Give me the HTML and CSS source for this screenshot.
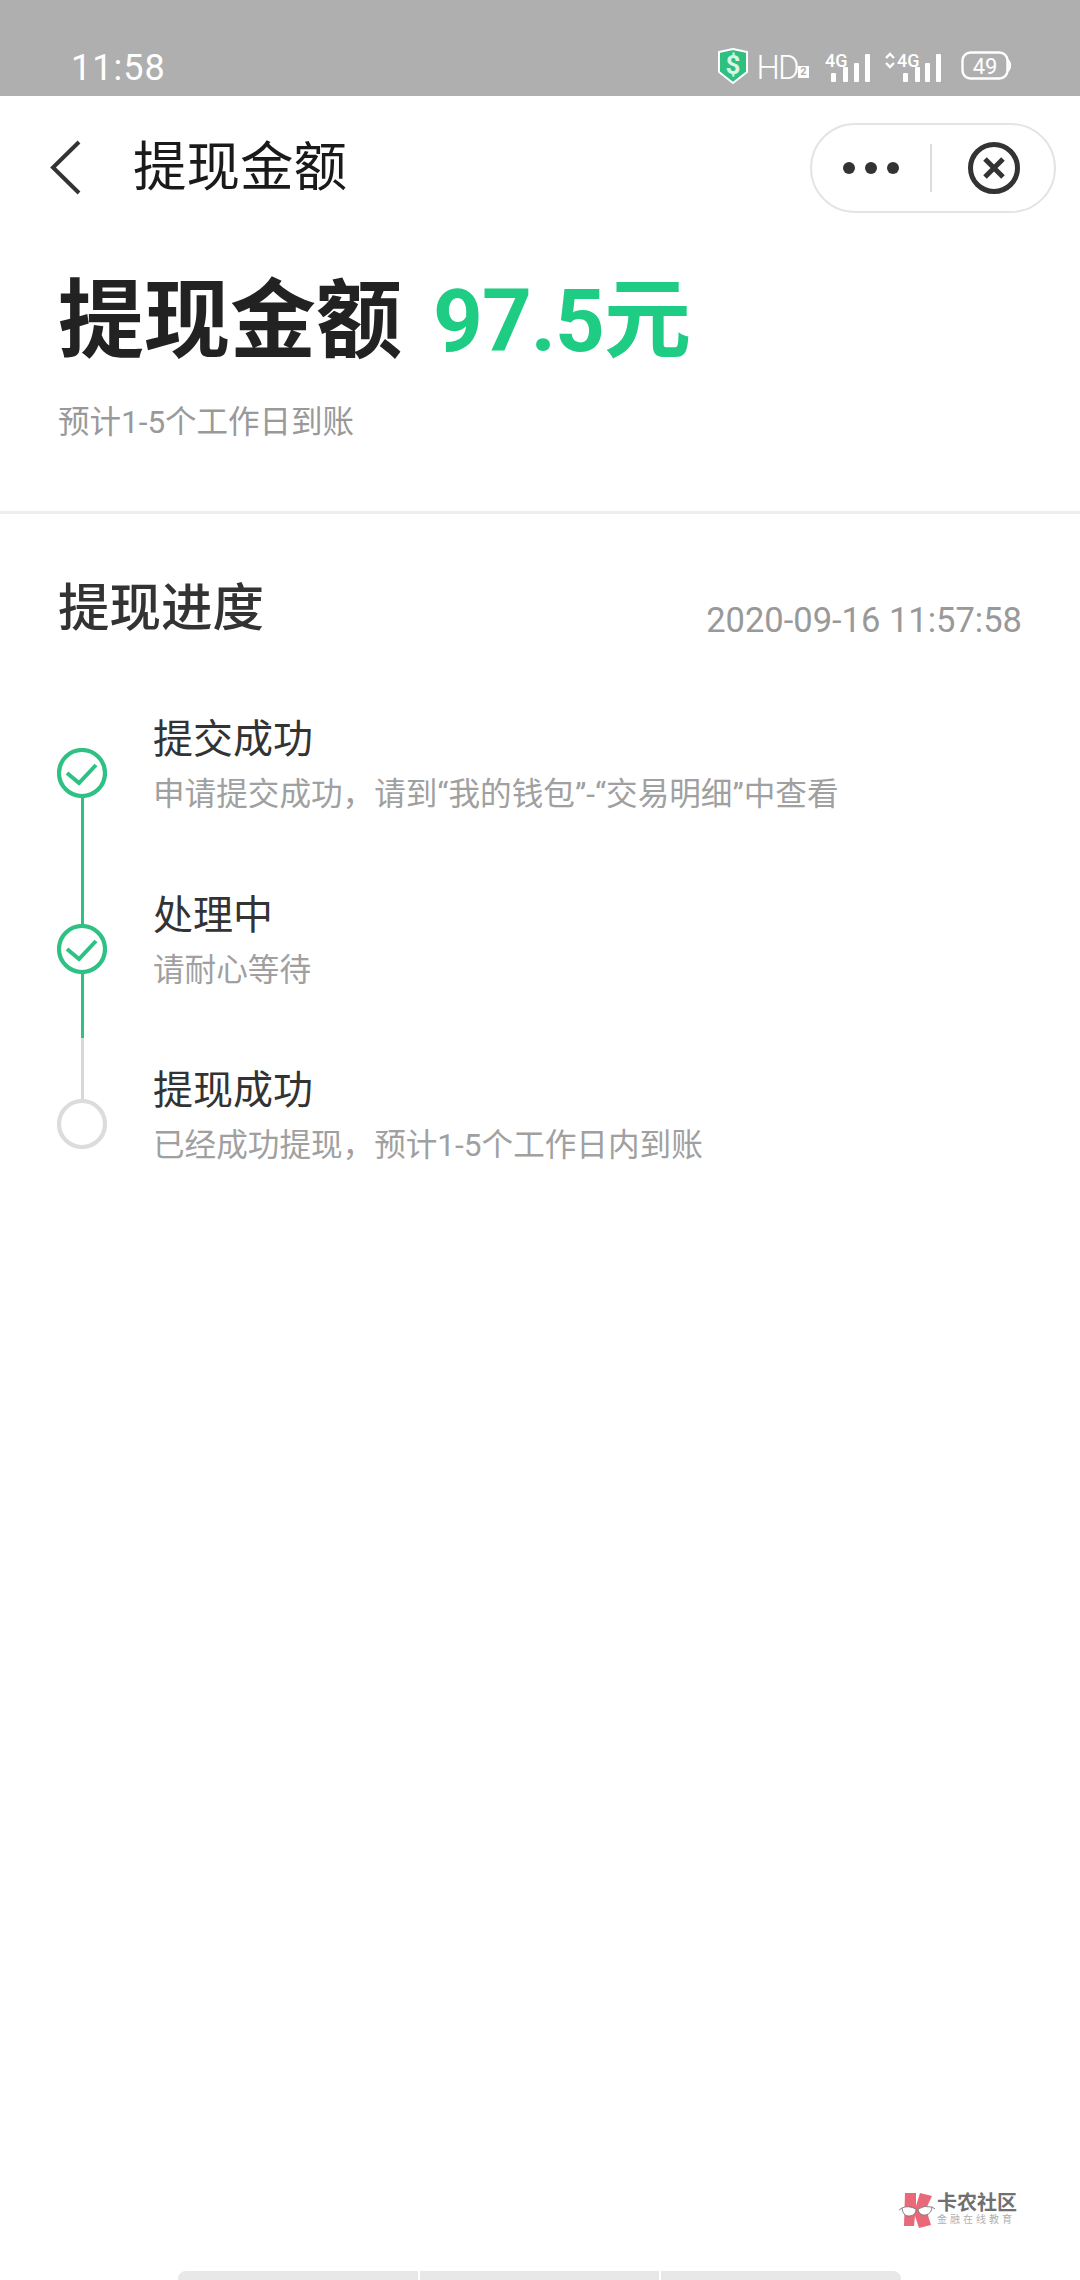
FILE: index.html
```html
<!DOCTYPE html>
<html lang="zh">
<head>
    <meta charset="UTF-8">
    <meta name="viewport" content="width=device-width, initial-scale=1.0">
    <title>提现金额</title>
    <link rel="stylesheet" href="styles.css">
</head>
<body>

    <div class="status-bar">
        <span class="status-time">11:58</span>
        <div class="status-icons">
            <svg class="icon-shield" width="32" height="38" viewBox="0 0 32 38">
                <path d="M2 5 L16 2 L30 5 V25 L16 36 L2 25 Z" fill="#2fbf7f" stroke="#fff" stroke-width="2" stroke-linejoin="round"/>
                <text x="16" y="27" text-anchor="middle" class="shield-text">$</text>
            </svg>
            <span class="status-hd">HD</span>
            <span class="status-sim">2</span>
            <svg class="icon-signal" width="46" height="36" viewBox="0 -4 46 36">
                <text x="0" y="15" class="signal-text">4G</text>
                <rect x="6" y="21" width="5" height="9" rx="1" fill="#fff"/>
                <rect x="18" y="15" width="5" height="15" rx="1" fill="#fff"/>
                <rect x="29" y="11" width="5" height="19" rx="1" fill="#fff"/>
                <rect x="40" y="2" width="5" height="28" rx="1" fill="#fff"/>
            </svg>
            <svg class="icon-signal" width="58" height="36" viewBox="0 -4 58 36">
                <path d="M2 6 L6 2 L10 6 M2 11 L6 15 L10 11" fill="none" stroke="#fff" stroke-width="2.4"/>
                <text x="13" y="15" class="signal-text">4G</text>
                <rect x="19" y="21" width="5" height="9" rx="1" fill="#fff"/>
                <rect x="31" y="15" width="5" height="15" rx="1" fill="#fff"/>
                <rect x="41" y="11" width="5" height="19" rx="1" fill="#fff"/>
                <rect x="52" y="2" width="5" height="28" rx="1" fill="#fff"/>
            </svg>
            <svg class="icon-battery" width="52" height="30" viewBox="0 0 52 30">
                <rect x="1.5" y="1.5" width="45" height="26" rx="8" fill="none" stroke="#fff" stroke-width="2.4"/>
                <path d="M48 10 Q51 14.5 48 19 Z" fill="#fff" stroke="#fff" stroke-width="1.5"/>
                <text x="24" y="23" text-anchor="middle" class="battery-text">49</text>
            </svg>
        </div>
    </div>

    <div class="nav-bar">
        <svg class="nav-back" width="40" height="60" viewBox="0 0 40 60">
            <path d="M32 4 L6 29.5 L32 55" fill="none" stroke="#333" stroke-width="4"/>
        </svg>
        <span class="nav-title">提现金额</span>
        <div class="capsule">
            <div class="capsule-dots">
                <span class="dot"></span>
                <span class="dot"></span>
                <span class="dot"></span>
            </div>
            <span class="capsule-line"></span>
            <svg class="capsule-close" width="54" height="54" viewBox="0 0 54 54">
                <circle cx="27" cy="27" r="23.5" fill="none" stroke="#333" stroke-width="5"/>
                <path d="M18 18 L36 36 M36 18 L18 36" fill="none" stroke="#333" stroke-width="5"/>
            </svg>
        </div>
    </div>

    <div class="hero">
        <h1 class="hero-title">提现金额<span class="hero-amount">97.5元</span></h1>
        <p class="hero-sub">预计1-5个工作日到账</p>
    </div>

    <div class="divider"></div>

    <div class="progress-head">
        <h2 class="progress-title">提现进度</h2>
        <span class="progress-date">2020-09-16 11:57:58</span>
    </div>

    <div class="steps">
        <div class="step">
            <div class="step-marker">
                <svg width="50" height="50" viewBox="0 0 50 50">
                    <circle cx="25" cy="25" r="23" fill="none" stroke="#2fc184" stroke-width="4.2"/>
                    <path d="M10 25 L22 35 L39 17" fill="none" stroke="#2fc184" stroke-width="4"/>
                </svg>
                <span class="step-line"></span>
            </div>
            <div class="step-text">
                <div class="step-name">提交成功</div>
                <div class="step-desc">申请提交成功，请到“我的钱包”-“交易明细”中查看</div>
            </div>
        </div>
        <div class="step">
            <div class="step-marker">
                <svg width="50" height="50" viewBox="0 0 50 50">
                    <circle cx="25" cy="25" r="23" fill="none" stroke="#2fc184" stroke-width="4.2"/>
                    <path d="M10 25 L22 35 L39 17" fill="none" stroke="#2fc184" stroke-width="4"/>
                </svg>
                <span class="step-line step-line-half"></span>
            </div>
            <div class="step-text">
                <div class="step-name">处理中</div>
                <div class="step-desc">请耐心等待</div>
            </div>
        </div>
        <div class="step">
            <div class="step-marker">
                <svg width="50" height="50" viewBox="0 0 50 50">
                    <circle cx="25" cy="25" r="23" fill="none" stroke="#dcdcdc" stroke-width="4.2"/>
                </svg>
            </div>
            <div class="step-text">
                <div class="step-name">提现成功</div>
                <div class="step-desc">已经成功提现，预计1-5个工作日内到账</div>
            </div>
        </div>
    </div>

    <!-- watermark, sits over the page -->
    <div class="watermark">
        <svg width="36" height="36" viewBox="0 0 36 36">
            <path d="M6 1 L17 1 L17 14 L21 1 L33 4 L27 17 L32 33 L20 36 L16 24 L15 34 L5 34 Z" fill="#e9697a"/>
            <path d="M3 16 Q4 25 11 24 Q17 23 17 17 Q9 13 3 16 Z M19 17 Q20 24 27 23 Q33 21 33 15 Q25 13 19 17 Z" fill="#fff" stroke="#777" stroke-width="0.9"/>
            <path d="M0 18 L3 16 M33 15 L36 17" fill="none" stroke="#777" stroke-width="0.9"/>
        </svg>
        <div class="watermark-text">
            <div class="watermark-name">卡农社区</div>
            <div class="watermark-slogan">金融在线教育</div>
        </div>
    </div>

    <div class="bottom-tabs">
        <span class="bottom-tab"></span>
        <span class="bottom-tab"></span>
        <span class="bottom-tab"></span>
    </div>

</body>
</html>
```

FILE: styles.css
```css
/* page */
html, body {
    margin: 0;
    padding: 0;
}

body {
    position: relative;
    width: 1080px;
    height: 2280px;
    overflow: hidden;
    background-color: #ffffff;
    font-family: Roboto, "Noto Sans CJK SC", sans-serif;
}

h1, h2, p {
    margin: 0;
    font-weight: normal;
}

/* status bar */
.status-bar {
    display: flex;
    justify-content: space-between;
    height: 96px;
    box-sizing: border-box;
    padding: 47px 67px 0 71px;
    background-color: #afafaf;
    color: #ffffff;
}

.status-time {
    font-size: 36px;
    line-height: 42px;
    letter-spacing: 1px;
}

.status-icons {
    display: flex;
    align-items: flex-start;
}

.icon-shield {
    margin-right: 7.5px;
}

.status-hd {
    font-size: 33px;
    font-weight: 300;
    line-height: 42px;
    letter-spacing: -1.7px;
}

.status-sim {
    width: 11px;
    height: 12px;
    margin: 19px 16px 0 0;
    background-color: #ffffff;
    color: #afafaf;
    font-size: 11px;
    font-weight: bold;
    line-height: 12px;
    text-align: center;
}

.icon-signal {
    margin: 1px 13px 0 0;
}

.icon-battery {
    margin: 4px 0 0 6px;
}

.shield-text {
    fill: #d8f5e6;
    font-size: 26px;
    font-weight: bold;
}

.signal-text {
    fill: #ffffff;
    font-size: 18px;
    font-weight: 500;
}

.battery-text {
    fill: #ffffff;
    font-size: 22px;
}

/* nav bar */
.nav-bar {
    display: flex;
    align-items: center;
    height: 143px;
    padding: 0 24px 0 47px;
}

.nav-title {
    margin-left: 46px;
    color: #1a1a1a;
    font-size: 53.5px;
    line-height: 60px;
}

.capsule {
    display: flex;
    align-items: center;
    width: 246px;
    height: 90px;
    box-sizing: border-box;
    margin-left: auto;
    border: 2px solid #e4e4e4;
    border-radius: 45px;
}

.capsule-dots {
    display: flex;
    gap: 10px;
    margin-left: 31px;
}

.dot {
    width: 12px;
    height: 12px;
    border-radius: 50%;
    background-color: #333333;
}

.capsule-line {
    width: 2px;
    height: 48px;
    margin-left: 31px;
    background-color: #dddddd;
}

.capsule-close {
    margin-left: 35px;
}

/* amount */
.hero {
    padding: 22px 58px 66px;
}

.hero-title {
    color: #222222;
    font-size: 86px;
    font-weight: bold;
    line-height: 120px;
}

.hero-amount {
    margin-left: 31px;
    color: #1fcc84;
    font-size: 87px;
    letter-spacing: -1px;
}

.hero-sub {
    margin-top: 19px;
    color: #999999;
    font-size: 31.5px;
    line-height: 44px;
}

.divider {
    height: 3px;
    background-color: #eeeeee;
}

/* progress */
.progress-head {
    display: flex;
    justify-content: space-between;
    margin-top: 65px;
    padding: 0 58px;
}

.progress-title {
    color: #333333;
    font-size: 51.5px;
    font-weight: 500;
    line-height: 60px;
}

.progress-date {
    align-self: flex-end;
    color: #999999;
    font-size: 34.5px;
    line-height: 38px;
}

.steps {
    margin-top: 109px;
    padding-left: 57px;
}

.step {
    display: flex;
    height: 175.5px;
}

.step-marker {
    display: flex;
    flex-direction: column;
    align-items: center;
    width: 50px;
}

.step-marker svg {
    flex: none;
    display: block;
}

.step-line {
    flex: 1;
    width: 3px;
    background-color: #2fc184;
}

.step-line-half {
    background: linear-gradient(#2fc184 51%, #d8d8d8 51%);
}

.step-text {
    margin: -33px 0 0 46px;
}

.step-name {
    color: #333333;
    font-size: 40px;
    line-height: 50px;
}

.step-desc {
    margin-top: 8px;
    color: #a0a0a0;
    font-size: 31.6px;
    line-height: 44px;
}

/* watermark */
.watermark {
    position: absolute;
    top: 2192px;
    left: 899px;
    display: flex;
    gap: 2px;
}

.watermark-name {
    color: #707070;
    font-size: 20px;
    font-weight: bold;
    line-height: 22px;
}

.watermark-slogan {
    color: #b0b0b0;
    font-size: 10px;
    line-height: 12px;
    letter-spacing: 3px;
}

/* bottom tabs */
.bottom-tabs {
    position: absolute;
    bottom: 0;
    left: 178px;
    display: flex;
    gap: 2px;
    width: 723px;
    height: 9px;
}

.bottom-tab {
    flex: 1;
    background-color: #e8e8e8;
}

.bottom-tab:first-child {
    border-top-left-radius: 8px;
}

.bottom-tab:last-child {
    border-top-right-radius: 8px;
}
```
